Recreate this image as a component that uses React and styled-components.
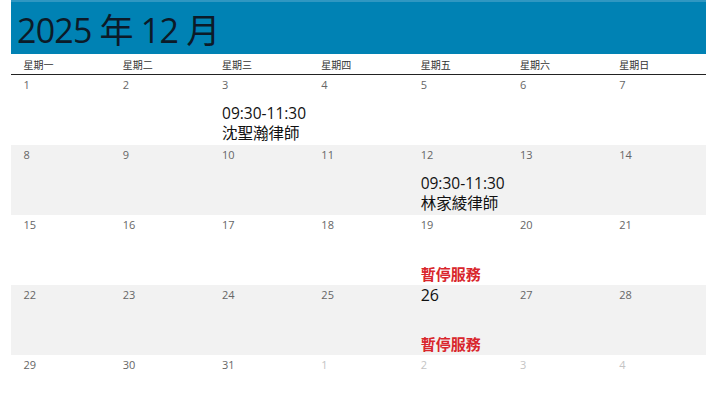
import styled, { createGlobalStyle } from "styled-components";

const GlobalStyle = createGlobalStyle`
    body {
        margin: 0;
        background: #fff;
        font-family: "Open Sans", "Noto Sans CJK TC", sans-serif;
    }
`;

const weekdays = ["星期一", "星期二", "星期三", "星期四", "星期五", "星期六", "星期日"];

const events = {
    3: { time: "09:30-11:30", name: "沈聖瀚律師" },
    12: { time: "09:30-11:30", name: "林家綾律師" },
    19: { closed: true },
    26: { closed: true },
};

const TODAY = 26;

const buildWeeks = () => {
    const days = [];
    for (let d = 1; d <= 31; d++) days.push({ day: d, current: true });
    for (let d = 1; d <= 4; d++) days.push({ day: d, current: false });
    const weeks = [];
    for (let i = 0; i < days.length; i += 7) weeks.push(days.slice(i, i + 7));
    return weeks;
};

const App = () => {
    const weeks = buildWeeks();
    return (
        <Page>
            <GlobalStyle />
            <Header>
                <Title>2025 年 12 月</Title>
            </Header>
            <WeekHeader>
                {weekdays.map((w) => (
                    <WeekLabel key={w}>{w}</WeekLabel>
                ))}
            </WeekHeader>
            {weeks.map((week, i) => (
                <WeekRow key={i} $shaded={i % 2 === 1}>
                    {week.map(({ day, current }) => {
                        const ev = current ? events[day] : null;
                        return (
                            <DayCell key={`${i}-${day}`}>
                                <DayNumber $muted={!current} $today={current && day === TODAY}>
                                    {day}
                                </DayNumber>
                                {ev && ev.closed && <Closed>暫停服務</Closed>}
                                {ev && !ev.closed && (
                                    <Event>
                                        <div>{ev.time}</div>
                                        <div>{ev.name}</div>
                                    </Event>
                                )}
                            </DayCell>
                        );
                    })}
                </WeekRow>
            ))}
        </Page>
    );
};

const Page = styled.div`
    width: 695px;
    padding-left: 11px;
`;

const Header = styled.div`
    height: 54px;
    background: #0082b4;
    border-top: 2px solid #2f97c2;
    box-sizing: border-box;
    display: flex;
    align-items: center;
    padding-left: 6px;
`;

const Title = styled.h1`
    margin: 0;
    font-size: 34px;
    font-weight: 400;
    color: #0c1a28;
    letter-spacing: -0.8px;
`;

const WeekHeader = styled.div`
    display: grid;
    grid-template-columns: repeat(7, 1fr);
    height: 20px;
    border-bottom: 1px solid #222;
    align-items: center;
`;

const WeekLabel = styled.div`
    padding-left: 12.5px;
    font-size: 10px;
    color: #333;
`;

const WeekRow = styled.div`
    display: grid;
    grid-template-columns: repeat(7, 1fr);
    height: 70px;
    background: ${(p) => (p.$shaded ? "#f2f2f2" : "transparent")};
`;

const DayCell = styled.div`
    display: flex;
    flex-direction: column;
    padding: 2px 0 2px 12.5px;
    box-sizing: border-box;
`;

const DayNumber = styled.div`
    font-size: ${(p) => (p.$today ? "16px" : "11px")};
    line-height: ${(p) => (p.$today ? "18px" : "16px")};
    margin-top: ${(p) => (p.$today ? "-1px" : "0")};
    color: ${(p) => (p.$today ? "#111" : p.$muted ? "#c4c4c4" : "#666")};
`;

const Event = styled.div`
    margin-top: auto;
    font-size: 15.5px;
    line-height: 20px;
    font-weight: 400;
    color: #111;
`;

const Closed = styled.div`
    margin-top: auto;
    font-size: 15px;
    line-height: 17px;
    font-weight: 700;
    color: #d9262c;
`;

export default App;
